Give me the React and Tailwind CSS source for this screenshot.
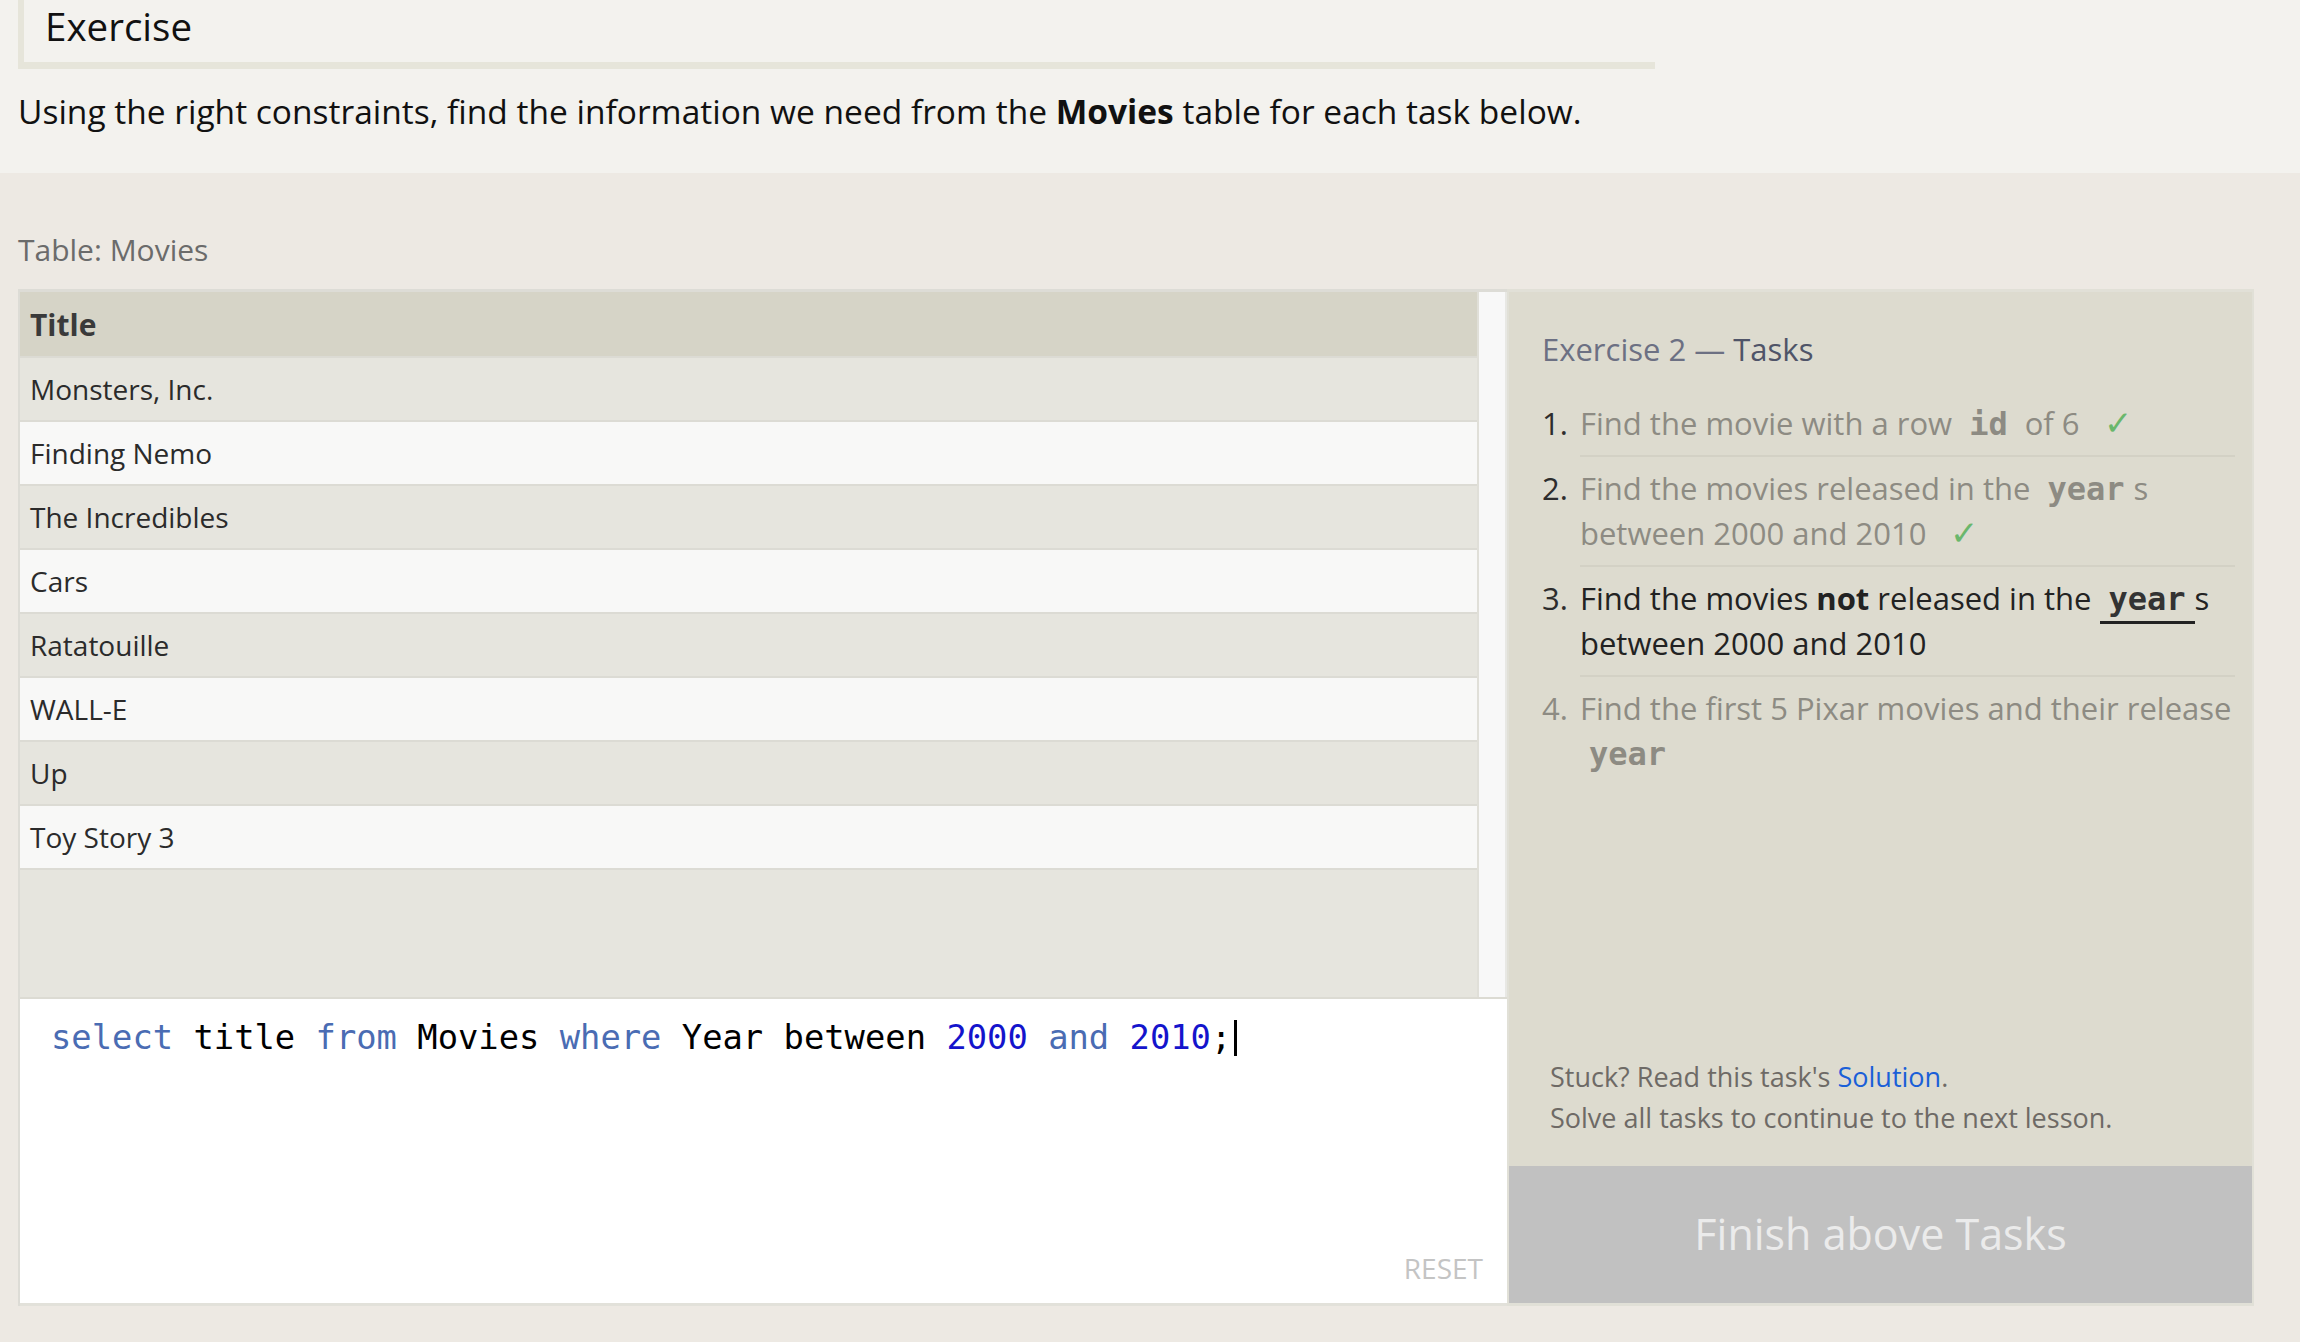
const rows = [
  "Monsters, Inc.",
  "Finding Nemo",
  "The Incredibles",
  "Cars",
  "Ratatouille",
  "WALL-E",
  "Up",
  "Toy Story 3",
];

const sans = "font-['Open_Sans','Lato',sans-serif]";
const mono = "font-['DejaVu_Sans_Mono','Liberation_Mono',monospace]";

function Code({ children, dark }) {
  return (
    <code
      className={`${mono} font-bold text-[32px] leading-none px-[9px] ${
        dark ? "text-[#333] border-b-[3px] border-[#222] pb-[3px]" : "text-[#8d8b83]"
      }`}
    >
      {children}
    </code>
  );
}

function Check() {
  return <span className="ml-[24px] text-[#6ab76c] text-[34px] leading-none">✓</span>;
}

function Task({ n, done, current, last, children }) {
  const numColor = current || done ? "text-[#2d2d2d]" : "text-[#8d8b83]";
  const textColor = current ? "text-[#222]" : "text-[#8d8b83]";
  return (
    <li className="flex">
      <span className={`w-[38px] shrink-0 pt-[9px] leading-[45px] ${numColor}`}>{n}.</span>
      <div
        className={`flex-1 py-[9px] leading-[45px] whitespace-nowrap ${textColor} ${
          last ? "" : "border-b-2 border-[#d3d1c5]"
        }`}
      >
        {children}
      </div>
    </li>
  );
}

export default function App() {
  return (
    <div className={`${sans} min-h-[1342px] bg-[#ede9e3] text-[#111]`}>
      <div className="bg-[#f3f2ee] h-[173px] pl-[18px]">
        <div className="w-[1637px] h-[69px] border-l-[6px] border-b-[7px] border-[#e6e5da] pl-[21px] pt-[4px]">
          <h2 className="text-[38.5px] leading-[44px] text-[#111]">Exercise</h2>
        </div>
        <p className="mt-[22px] text-[33.5px] leading-[40px] text-[#111]">
          Using the right constraints, find the information we need from the <b>Movies</b> table for
          each task below.
        </p>
      </div>

      <div className="pl-[18px] pt-[59px] pb-[33px]">
        <div className="text-[30px] leading-[36px] text-[#6b6b6b] mb-[21px]">Table: Movies</div>

        <div className="flex w-[2236px]">
          <div className="w-[1489px] flex flex-col border-l-2 border-t-[3px] border-[#dddcd6]">
            <div className="flex h-[707px] bg-[#e6e5de] border-b-2 border-[#dcdbd3]">
              <div className="flex-1">
                <div className="h-[66px] bg-[#d6d4c7] border-b-2 border-[#dcdbd4] flex items-center pl-[10px] text-[30px] font-bold text-[#3a3a3a]">
                  Title
                </div>
                {rows.map((r, i) => (
                  <div
                    key={r}
                    className={`h-[64px] border-b-2 border-[#dcdbd4] flex items-center pl-[10px] text-[28px] text-[#2b2b2b] ${
                      i % 2 === 0 ? "bg-[#e6e5de]" : "bg-[#f8f8f7]"
                    }`}
                  >
                    {r}
                  </div>
                ))}
              </div>
              <div className="w-[30px] border-l-2 border-r-2 border-l-[#e0dfd8] border-r-[#e8e8e4] bg-[#f8f8f8]" />
            </div>

            <div className="h-[307px] bg-white border-b-[3px] border-[#e2e1da] flex flex-col pl-[31px] pt-[18px] pr-[24px] pb-[18px]">
              <div className={`${mono} text-[33.8px] leading-[42px] text-black whitespace-pre`}>
                <span className="text-[#4a6cb3]">select</span> title{" "}
                <span className="text-[#4a6cb3]">from</span> Movies{" "}
                <span className="text-[#4a6cb3]">where</span> Year between{" "}
                <span className="text-[#1414cc]">2000</span>{" "}
                <span className="text-[#4a6cb3]">and</span>{" "}
                <span className="text-[#1414cc]">2010</span>;
                <span className="inline-block w-[3px] h-[36px] bg-black ml-[3px] align-[-7px]" />
              </div>
              <div className="mt-auto self-end text-[28px] leading-[34px] text-[#c4c4c4]">RESET</div>
            </div>
          </div>

          <div className="w-[747px] flex flex-col bg-[#dddbcf] border-t-[3px] border-x-2 border-[#e1e0d7]">
            <div className="flex-1 flex flex-col pl-[33px] pr-[17px] pt-[37px]">
              <h3 className="text-[31px] leading-[40px] text-[#6c7083]">
                Exercise 2 — <span className="text-[#4f5468]">Tasks</span>
              </h3>
              <ol className="mt-[23px] text-[31px]">
                <Task n={1} done>
                  Find the movie with a row <Code>id</Code> of 6
                  <Check />
                </Task>
                <Task n={2} done>
                  Find the movies released in the <Code>year</Code>s
                  <br />
                  between 2000 and 2010
                  <Check />
                </Task>
                <Task n={3} current>
                  Find the movies <b>not</b> released in the <Code dark>year</Code>s
                  <br />
                  between 2000 and 2010
                </Task>
                <Task n={4} last>
                  Find the first 5 Pixar movies and their release
                  <br />
                  <Code>year</Code>
                </Task>
              </ol>
              <div className="mt-auto pl-[8px] pb-[28px] text-[27px] leading-[41px] text-[#6e6a66]">
                <p>
                  Stuck? Read this task's <span className="text-[#1a5fd8]">Solution</span>.
                </p>
                <p>Solve all tasks to continue to the next lesson.</p>
              </div>
            </div>
            <div className="h-[140px] bg-[#c1c1c1] border-b-[3px] border-[#e1e0d7] flex items-center justify-center text-[43px] text-[#ebebeb]">
              Finish above Tasks
            </div>
          </div>
        </div>
      </div>
    </div>
  );
}
